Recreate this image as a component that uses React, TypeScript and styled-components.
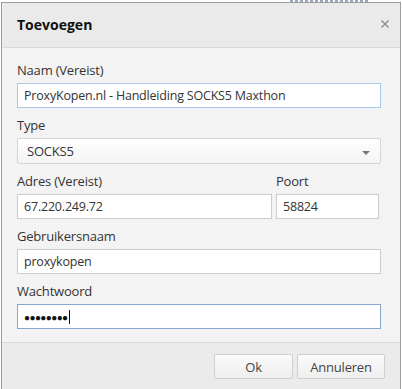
import React from 'react';
import styled, { createGlobalStyle } from 'styled-components';

const colors = {
  frame: '#9d9d9d',
  header: '#eaeaea',
  body: '#f3f3f3',
  footer: '#ebebeb',
  divider: '#d9d9d9',
  text: '#333333',
  inputBorder: '#cccccc',
  focus: '#a6c8ee',
  focusStrong: '#86a9d2',
};

const GlobalStyle = createGlobalStyle`
  html, body {
    margin: 0;
    padding: 0;
    background: #ffffff;
  }
  body {
    font-family: "Open Sans", "Noto Sans", "Liberation Sans", sans-serif;
    color: ${colors.text};
  }
  * { box-sizing: border-box; }
`;

// strip of the page behind the dialog, only its last pixels show
const Backdrop = styled.div`
  height: 2px;
  margin-left: 290px;
  width: 78px;
  background: repeating-linear-gradient(90deg, #4a5a80 0 3px, transparent 3px 5px);
  opacity: 0.55;
`;

const Dialog = styled.div`
  width: 400px;
  margin-left: 1px;
  border: 1px solid ${colors.frame};
  background: ${colors.body};
`;

const Header = styled.div`
  height: 45px;
  display: flex;
  align-items: center;
  justify-content: space-between;
  padding: 0 11px 0 15px;
  background: ${colors.header};
  border-bottom: 1px solid ${colors.divider};
`;

const Title = styled.h2`
  margin: 0 0 1px;
  font-size: 14px;
  font-weight: 700;
  color: #111;
`;

const CloseIcon = () => (
  <svg width="8" height="8" viewBox="0 0 8 8" style={{ marginBottom: 3 }}>
    <path d="M0.5 0.5 L7.5 7.5 M7.5 0.5 L0.5 7.5" stroke="#8c8c8c" strokeWidth="1.4" />
  </svg>
);

const Body = styled.div`
  padding: 12px 19px 13px 15px;
  display: flex;
  flex-direction: column;
  gap: 7px;
`;

const Row = styled.div`
  display: flex;
  gap: 4px;
`;

const Field = styled.div<{ $grow?: boolean; $width?: number }>`
  display: flex;
  flex-direction: column;
  ${p => (p.$grow ? 'flex: 1;' : '')}
  ${p => (p.$width ? `width: ${p.$width}px; margin-right: 2px;` : '')}
`;

const Label = styled.label`
  font-size: 13px;
  line-height: 20px;
  height: 20px;
  margin-bottom: 3px;
  letter-spacing: -0.2px;
  color: #333;
`;

const Input = styled.input<{ $focus?: boolean }>`
  width: 100%;
  height: 25px;
  padding: 0 6px;
  margin: 0;
  font-family: inherit;
  font-size: 12.5px;
  letter-spacing: -0.2px;
  color: #333;
  background: #fff;
  border: 1px solid ${p => (p.$focus ? colors.focus : colors.inputBorder)};
  border-radius: 0;
  outline: none;
`;

const SelectBox = styled.div`
  position: relative;
  height: 26px;
  display: flex;
  align-items: center;
  padding: 0 9px;
  font-size: 13px;
  letter-spacing: -0.2px;
  background: linear-gradient(#ffffff, #f4f4f4);
  border: 1px solid #d4d4d4;
  border-radius: 2px;
`;

const Caret = styled.span`
  position: absolute;
  right: 10px;
  top: 12px;
  width: 0;
  height: 0;
  border-left: 4px solid transparent;
  border-right: 4px solid transparent;
  border-top: 4px solid #777;
`;

const PasswordInput = styled.div`
  height: 25px;
  display: flex;
  align-items: center;
  padding: 0 6px;
  background: #fff;
  border: 1px solid ${colors.focusStrong};
`;

const Dots = styled.span`
  font-size: 10px;
  letter-spacing: -0.6px;
  color: #111;
`;

const CaretLine = styled.span`
  width: 1px;
  height: 14px;
  background: #111;
  margin-left: 1px;
`;

const Footer = styled.div`
  height: 47px;
  display: flex;
  justify-content: flex-end;
  align-items: flex-start;
  gap: 4px;
  padding: 11px 15px 0 0;
  background: ${colors.footer};
  border-top: 1px solid ${colors.divider};
`;

const Button = styled.button<{ $width: number }>`
  width: ${p => p.$width}px;
  height: 25px;
  font-family: inherit;
  font-size: 13px;
  letter-spacing: -0.2px;
  color: #444;
  background: linear-gradient(#fbfbfb, #eeeeee);
  border: 1px solid #cfcfcf;
  border-radius: 2px;
`;

const App = () => {
  return (
    <>
      <GlobalStyle />
      <Backdrop />
      <Dialog>
        <Header>
          <Title>Toevoegen</Title>
          <CloseIcon />
        </Header>
        <Body>
          <Field>
            <Label>Naam (Vereist)</Label>
            <Input $focus defaultValue="ProxyKopen.nl - Handleiding SOCKS5 Maxthon" />
          </Field>
          <Field>
            <Label>Type</Label>
            <SelectBox>
              SOCKS5
              <Caret />
            </SelectBox>
          </Field>
          <Row>
            <Field $grow>
              <Label>Adres (Vereist)</Label>
              <Input defaultValue="67.220.249.72" />
            </Field>
            <Field $width={103}>
              <Label>Poort</Label>
              <Input defaultValue="58824" />
            </Field>
          </Row>
          <Field>
            <Label>Gebruikersnaam</Label>
            <Input defaultValue="proxykopen" />
          </Field>
          <Field>
            <Label>Wachtwoord</Label>
            <PasswordInput>
              <Dots>●●●●●●●●</Dots>
              <CaretLine />
            </PasswordInput>
          </Field>
        </Body>
        <Footer>
          <Button $width={79}>Ok</Button>
          <Button $width={88}>Annuleren</Button>
        </Footer>
      </Dialog>
    </>
  );
};

export default App;
